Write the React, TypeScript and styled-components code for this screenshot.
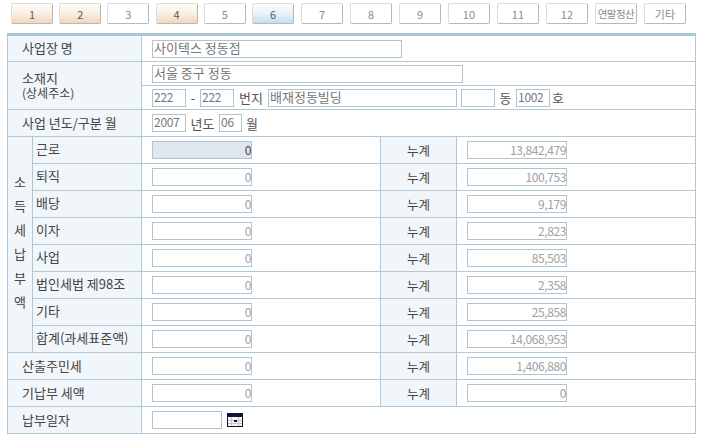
import styled, { createGlobalStyle } from 'styled-components';

const GlobalStyle = createGlobalStyle`
  html, body { margin: 0; padding: 0; background: #fff; }
  body { font-family: "Noto Sans CJK KR", "Liberation Sans", sans-serif; font-size: 13px; color: #444; }
`;

const firstTabs = [
  { label: '1', tone: 'done' },
  { label: '2', tone: 'done' },
  { label: '3', tone: 'off' },
  { label: '4', tone: 'done' },
  { label: '5', tone: 'off' },
  { label: '6', tone: 'active' },
] as const;

const otherTabs = ['7', '8', '9', '10', '11', '12'];

const taxRows = [
  ['근로', '13,842,479'],
  ['퇴직', '100,753'],
  ['배당', '9,179'],
  ['이자', '2,823'],
  ['사업', '85,503'],
  ['법인세법 제98조', '2,358'],
  ['기타', '25,858'],
  ['합계(과세표준액)', '14,068,953'],
];

function Amount({ value, shaded }: { value: string; shaded?: boolean }) {
  return <AmountField $shaded={shaded}>{value}</AmountField>;
}

export default function App() {
  return (
    <Page>
      <GlobalStyle />
      <TabBar>
        <TabGroup $gap={6.2}>
          {firstTabs.map((t) => (
            <Tab key={t.label} $tone={t.tone}>{t.label}</Tab>
          ))}
        </TabGroup>
        <TabGroup $gap={7}>
          {otherTabs.map((t) => (
            <Tab key={t} $tone="off">{t}</Tab>
          ))}
          <Tab $tone="off" $narrow>연말정산</Tab>
          <Tab $tone="off">기타</Tab>
        </TabGroup>
      </TabBar>
      <Form>
        <colgroup>
          <col width={25} />
          <col width={109} />
          <col width={239} />
          <col width={76} />
          <col />
        </colgroup>
        <tbody>
          <Row $h={27}>
            <Label colSpan={2}>사업장 명</Label>
            <Value colSpan={3}><TextField $w={250}>사이텍스 정동점</TextField></Value>
          </Row>
          <Row $h={24}>
            <AddressLabel colSpan={2} rowSpan={2}>소재지<br /><small>(상세주소)</small></AddressLabel>
            <Value colSpan={3}><TextField $w={311}>서울 중구 정동</TextField></Value>
          </Row>
          <Row $h={24}>
            <Value colSpan={3}>
              <Inline>
                <NumberField $w={34}>222</NumberField>
                <Unit $w={14}>-</Unit>
                <NumberField $w={34}>222</NumberField>
                <Unit $w={34}>번지</Unit>
                <TextField $w={189}>배재정동빌딩</TextField>
                <Spacer />
                <NumberField $w={34}></NumberField>
                <Unit $w={21}>동</Unit>
                <NumberField $w={34}>1002</NumberField>
                <Unit $w={16}>호</Unit>
              </Inline>
            </Value>
          </Row>
          <Row $h={27}>
            <Label colSpan={2}>사업 년도/구분 월</Label>
            <Value colSpan={3}>
              <Inline>
                <NumberField $w={34}>2007</NumberField>
                <Unit $w={33}>년도</Unit>
                <NumberField $w={23}>06</NumberField>
                <Unit $w={20}>월</Unit>
              </Inline>
            </Value>
          </Row>
          {taxRows.map(([name, total], i) => (
            <Row $h={27} key={name}>
              {i === 0 && <VerticalLabel rowSpan={8}>소득세납부액</VerticalLabel>}
              <SubLabel>{name}</SubLabel>
              <Value><Amount value="0" shaded={i === 0} /></Value>
              <TotalLabel>누계</TotalLabel>
              <Value><Amount value={total} /></Value>
            </Row>
          ))}
          <Row $h={27}>
            <Label colSpan={2}>산출주민세</Label>
            <Value><Amount value="0" /></Value>
            <TotalLabel>누계</TotalLabel>
            <Value><Amount value="1,406,880" /></Value>
          </Row>
          <Row $h={27}>
            <Label colSpan={2}>기납부 세액</Label>
            <Value><Amount value="0" /></Value>
            <TotalLabel>누계</TotalLabel>
            <Value><Amount value="0" /></Value>
          </Row>
          <Row $h={27}>
            <Label colSpan={2}>납부일자</Label>
            <Value colSpan={3}>
              <Inline>
                <TextField $w={70}></TextField>
                <CalendarIcon width="16" height="14" viewBox="0 0 16 14">
                  <rect x="0.5" y="0.5" width="15" height="13" fill="#f4f4f4" stroke="#101030" />
                  <rect x="0" y="0" width="16" height="4" fill="#101040" />
                  <path d="M1 7.5h14M1 10.5h14M4.5 4v9M11.5 4v9" stroke="#c4c4c4" fill="none" />
                  <rect x="7" y="7" width="3" height="2" fill="#101030" />
                </CalendarIcon>
              </Inline>
            </Value>
          </Row>
        </tbody>
      </Form>
    </Page>
  );
}

const Page = styled.div`
  width: 701px;
  height: 439px;
  overflow: hidden;
  background: #fff;
`;

const TabBar = styled.div`
  display: flex;
  gap: 7px;
  height: 33px;
  padding: 3px 0 0 11px;
  box-sizing: border-box;
`;

const TabGroup = styled.div<{ $gap: number }>`
  display: flex;
  gap: ${(p) => p.$gap}px;
`;

const tabFill = {
  done: 'linear-gradient(#fffdfb 0%, #fbf1e6 45%, #f2d6ba 100%)',
  active: 'linear-gradient(#fdfeff 0%, #e8f3fa 45%, #c4dfef 100%)',
  off: '#fff',
};

const Tab = styled.div<{ $tone: 'done' | 'off' | 'active'; $narrow?: boolean }>`
  width: 42px;
  height: 21px;
  box-sizing: border-box;
  display: flex;
  align-items: center;
  justify-content: center;
  border: 1px solid #dcdcdc;
  border-right-color: #b8b8b8;
  border-bottom-color: #b8b8b8;
  border-radius: 2px;
  background: ${(p) => tabFill[p.$tone]};
  color: ${(p) => (p.$tone === 'off' ? '#8a8a8a' : '#5a5a5a')};
  font-size: ${(p) => (p.$narrow ? '10.5px' : '11px')};
  letter-spacing: ${(p) => (p.$narrow ? '-0.6px' : '0')};
  white-space: nowrap;
`;

const Form = styled.table`
  width: 689px;
  margin-left: 7px;
  border-collapse: collapse;
  table-layout: fixed;
  border-top: 3px solid #a9c6d6;
`;

const Row = styled.tr<{ $h: number }>`
  height: ${(p) => p.$h}px;
`;

const Cell = styled.td`
  border: 1px solid #b0c8d8;
  padding: 0;
  box-sizing: border-box;
  line-height: 15px;
`;

const Label = styled(Cell)`
  background: #f1f6fa;
  padding: 0 0 2px 14px;
  color: #444;
`;

const AddressLabel = styled(Label)`
  small {
    font-size: 12px;
  }
`;

const SubLabel = styled(Cell)`
  background: #f1f6fa;
  padding: 0 0 3px 3px;
  color: #444;
  white-space: nowrap;
`;

const VerticalLabel = styled(Cell)`
  background: #f1f6fa;
  width: 25px;
  text-align: center;
  padding: 0 6px 6px;
  font-size: 13px;
  line-height: 24px;
  word-break: break-all;
`;

const TotalLabel = styled(Cell)`
  background: #f1f6fa;
  text-align: center;
  font-size: 12.5px;
`;

const Value = styled(Cell)`
  padding-left: 10px;
  background: #fff;
`;

const Inline = styled.div`
  display: flex;
  align-items: center;
`;

const TextField = styled.div<{ $w: number }>`
  width: ${(p) => p.$w}px;
  height: 18px;
  box-sizing: border-box;
  flex: none;
  border: 1px solid #b4c4cc;
  padding-left: 1px;
  line-height: 13px;
  color: #777;
  white-space: nowrap;
`;

const NumberField = styled(TextField)`
  font-size: 12px;
  letter-spacing: -0.3px;
`;

const AmountField = styled.div<{ $shaded?: boolean }>`
  width: 100px;
  height: 18px;
  box-sizing: border-box;
  border: 1px solid #b4c4cc;
  line-height: 16px;
  text-align: right;
  color: ${(p) => (p.$shaded ? '#444' : '#a0a0a0')};
  font-size: 12px;
  letter-spacing: -0.4px;
  background: ${(p) => (p.$shaded ? '#dfe6f0' : '#fff')};
`;

const Unit = styled.span<{ $w: number }>`
  width: ${(p) => p.$w}px;
  flex: none;
  text-align: center;
  color: #555;
`;

const Spacer = styled.span`
  width: 4px;
  flex: none;
`;

const CalendarIcon = styled.svg`
  margin-left: 5px;
  flex: none;
`;
